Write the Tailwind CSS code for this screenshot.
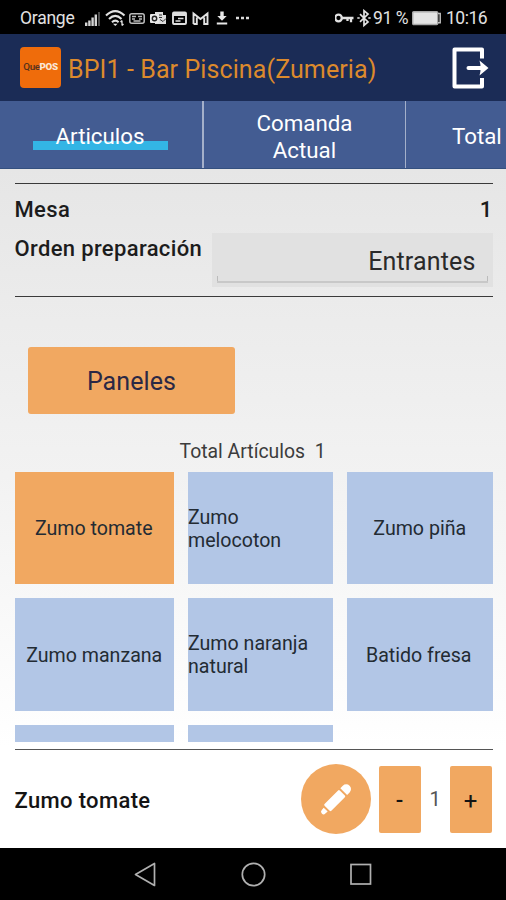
<!DOCTYPE html>
<html lang="es">
<head>
<meta charset="utf-8">
<title>Comandero</title>
<script src="https://cdn.jsdelivr.net/npm/@tailwindcss/browser@4"></script>
</head>
<body class="w-[506px] h-[900px] overflow-hidden flex flex-col bg-black text-[#222] whitespace-nowrap font-['Roboto','Noto_Sans',sans-serif]">

<!-- Status bar -->
<div class="h-[34px] shrink-0 flex items-center bg-black text-[#e2e2e2] pl-5 text-[17.5px] pt-[3px]">
  <span class="w-[64px] tracking-[-0.25px]">Orange</span>
  <svg class="h-5 w-[17px]" viewBox="0 0 17 20" fill="#d4d4d4"><path d="M1 13.500h2.400V17H1zM4.200 11.500h2.400V17H4.200zM7.400 8.500h2.400V17H7.400zM10.600 5.500H13V17h-2.400z"/><path d="M14 3H16v14h-2z" fill="#4c4c4c"/></svg>
  <svg class="ml-[4px] h-5 w-[22px]" viewBox="0 0 22 20" fill="none" stroke="#e2e2e2" stroke-width="2.100"><path d="M1 6.500C7 .8 13.500.8 19.500 6.500M4 10c4-4 8.500-4 12.500 0M7 13.200c2.200-2 4.400-2 6.600 0"/><path d="M8 14.700h4.600l-2.300 2.300z" fill="#e2e2e2" stroke="none"/><path d="M17 11.500v5m-1.500-3.500L17 11.500m1.500 3.500L17 16.500" stroke-width="1.300"/></svg>
  <svg class="ml-[2px] h-5 w-[16px]" viewBox="0 0 16 20" fill="none" stroke="#bdbdbd" stroke-width="1.500"><rect x=".8" y="4.800" width="14.400" height="9.400" rx="2"/><path d="M3 7.500h4M9 7.500h4M3 10h3M10 10h3M4.500 12h7"/></svg>
  <svg class="ml-[5px] h-5 w-[17px]" viewBox="0 0 17 20"><path d="M5 3h8v3h3v9H5z" fill="#dcdcdc"/><path d="M9 6h3M9 8.500h3m-2 2 3 2 3-3" stroke="#333" fill="none"/><rect y="5" width="9" height="9" rx="1" fill="#e8e8e8"/><circle cx="4.500" cy="9.500" r="2.200" fill="none" stroke="#222" stroke-width="1.400"/></svg>
  <svg class="ml-[5px] h-5 w-[15px]" viewBox="0 0 15 20" fill="none" stroke="#dedede" stroke-width="1.900"><rect x="1" y="3.500" width="13" height="11.500" rx="1"/><path d="M1 5.500h13" stroke-width="3"/><path d="M6 9.500h5.500M3.500 12h5" stroke-width="1.500"/></svg>
  <svg class="ml-[5px] h-5 w-[17px]" viewBox="0 0 17 20" fill="none" stroke="#e2e2e2" stroke-width="1.900"><path d="M1.500 15V4.500l7 5.500 7-5.500V15h-3.300V8.500M1.500 15h3.300V8.500"/></svg>
  <svg class="ml-[7px] h-5 w-[12px]" viewBox="0 0 12 20" fill="#e8e8e8"><path d="M4.300 2.500h3.400v4.500h3L6 11.800 1.300 7h3zM.8 13.500h10.400v1.900H.8z"/></svg>
  <svg class="ml-[8px] h-5 w-[14px]" viewBox="0 0 14 20" fill="#dcdcdc"><path d="M0 7.700h3v2.500H0zM5 7.700h3v2.500H5zM10 7.700h3v2.500h-3z"/></svg>
  <div class="ml-auto flex items-center pr-[18px]">
    <svg class="h-5 w-5" viewBox="0 0 20 20" fill="none" stroke="#e2e2e2" stroke-width="2.300"><circle cx="3.500" cy="9" r="3.300"/><path d="M7 9H18.500M16 9v4.200M12.500 9v3"/></svg>
    <svg class="ml-[2px] mr-px h-5 w-[15px]" viewBox="0 0 15 20" fill="none" stroke="#e2e2e2" stroke-width="1.700"><path d="M3 5.200 11 13 7 16.500V1.700L11 5 3 12.800"/><path d="M.3 9h2.400M11.300 9h2.400"/></svg>
    <span class="w-[39px] tracking-[-0.4px]">91 %</span>
    <svg class="h-5 w-[30px]" viewBox="0 0 30 20"><rect x=".7" y="2.700" width="25" height="12.800" rx="1" fill="#e4e4e4" stroke="#a8a8a8" stroke-width="1.400"/><path d="M26 4.500h2.200v9.200H26" fill="none" stroke="#bdbdbd" stroke-width="1.500"/></svg>
    <span class="ml-[4px] w-[42px] tracking-[-0.5px]">10:16</span>
  </div>
</div>

<!-- App header -->
<header class="h-[67px] shrink-0 flex items-center bg-[#1b2c56] pl-5 pr-[17px]">
  <div class="size-[41px] rounded-[4px] bg-[#ef6c0b] flex items-center justify-center text-[9.800px] font-medium tracking-[-0.4px] text-[#54301c]">Que<span class="font-black text-[#fbe6d6]">POS</span></div>
  <h1 class="ml-[7px] text-[25px] tracking-[0.1px] text-[#dc8a2d] pt-[4px]">BPI1 - Bar Piscina(Zumeria)</h1>
  <svg class="ml-auto h-[44px] w-[38px]" viewBox="0 0 38 44" fill="none" stroke="#fff" stroke-width="4"><path d="M31 12.500V3.500H3.500v37H31v-8.500" stroke-linejoin="round"/><path d="M17.500 22h14" stroke-linecap="round"/><path d="M28.500 14.500 37.500 22 28.500 29.500c1.500-5 1.500-10 0-15z" fill="#fff" stroke="none"/></svg>
</header>

<!-- Tabs -->
<nav class="h-[68px] shrink-0 flex bg-[#435c92] border-b border-[#34507f] text-white text-[22.300px] leading-[27px] text-center">
  <div class="w-[202px] shrink-0 flex items-center justify-center pt-[3px] pr-[2px]">
    <span class="w-[135px] bg-[linear-gradient(#33b5e5,#33b5e5)] bg-[length:100%_9px] bg-[position:0_18px] bg-no-repeat">Articulos</span>
  </div>
  <div class="w-[204px] shrink-0 flex items-center justify-center border-l-2 border-r border-[#a4b0ca] pt-[4px]"><span>Comanda<br>Actual</span></div>
  <div class="flex-1 flex items-center pl-[46px] pt-[3px]">Total</div>
</nav>

<!-- Order screen -->
<main class="h-[679px] shrink-0 flex flex-col pl-[14.500px] pr-[13.500px] bg-linear-to-b from-[#e6e6e6] via-[#f2f2f2] via-45% to-white to-85%">
  <section class="mt-[14px] h-[114px] border-y-[1.500px] border-[#3a3a3a] shrink-0 text-[22px] tracking-[0.350px] font-medium text-[#1c1c1c]">
    <div class="flex justify-between h-[48px] pt-[13px] leading-[26px]"><span>Mesa</span><span>1</span></div>
    <div class="flex justify-between mt-px">
      <span class="pt-[3px] leading-[26px]">Orden preparación</span>
      <div class="w-[281px] h-[54px] bg-[#e1e1e1] px-[5px] pt-[4px]">
        <div class="h-[46px] border-b-2 border-[#c8c8c8] flex items-center justify-end pr-[12px] pt-[5px] text-[25px] tracking-[0.150px] font-normal text-[#2a2a2a] bg-[linear-gradient(#bbb,#bbb),linear-gradient(#bbb,#bbb)] bg-[length:1px_5px] bg-[position:0_100%,100%_100%] bg-no-repeat">Entrantes</div>
      </div>
    </div>
  </section>

  <button class="mt-[50px] ml-[13.500px] w-[207px] h-[66.500px] shrink-0 rounded-[3px] bg-[#f1a861] text-[25px] tracking-[0.100px] text-[#2b2845] pt-[3px]">Paneles</button>

  <p class="mt-[25px] h-[33px] pl-[165px] shrink-0 text-[19.400px] leading-[25px] text-[#3c3c3c]">Total Artículos&nbsp; 1</p>

  <div class="h-[270px] overflow-hidden shrink-0 grid grid-cols-[159.500px_145px_145.500px] auto-rows-[112.500px] gap-x-[14px] gap-y-[14px] content-start text-[19.600px] leading-[23px] text-[#232b33]">
    <div class="bg-[#f1a861] flex items-center justify-center pt-[2px] pr-px">Zumo tomate</div>
    <div class="bg-[#b2c6e6] flex items-center pt-[2px]">Zumo<br>melocoton</div>
    <div class="bg-[#b2c6e6] flex items-center justify-center pt-[2px]">Zumo piña</div>
    <div class="bg-[#b2c6e6] flex items-center justify-center pt-[2px]">Zumo manzana</div>
    <div class="bg-[#b2c6e6] flex items-center pt-[2px]">Zumo naranja<br>natural</div>
    <div class="bg-[#b2c6e6] flex items-center justify-center pt-[2px] pr-[2px]">Batido fresa</div>
    <div class="bg-[#b2c6e6]"></div>
    <div class="bg-[#b2c6e6]"></div>
  </div>

  <footer class="mt-[7.500px] flex-1 flex items-center border-t-[1.500px] border-[#555] text-[#141414]">
    <span class="text-[22px] tracking-[0.350px] font-medium pt-[2px]">Zumo tomate</span>
    <div class="ml-auto flex items-center pr-[1px]">
      <div class="size-[70px] rounded-full bg-[#f1a861] flex items-center justify-center">
        <svg class="size-[34px]" viewBox="0 0 34 34" fill="#fff"><g transform="translate(17.300 17) rotate(-45)"><rect x="-13" y="-4.800" width="21.500" height="9.600" rx="1.200"/><path d="M10.500-4.800h3.500a4.800 4.800 0 0 1 0 9.600h-3.500z"/><path d="M-15-2.800v5.600l-3-.3a2.500 2.500 0 0 1 0-5z"/></g></svg>
      </div>
      <button class="ml-[8px] w-[42px] h-[67px] rounded-[2px] bg-[#f1a861] text-[22px] font-medium pt-[3px]">-</button>
      <span class="w-[29px] text-center text-[20px] text-[#555]">1</span>
      <button class="w-[42px] h-[67px] rounded-[2px] bg-[#f1a861] text-[24px] font-normal pt-[3px]">+</button>
    </div>
  </footer>
</main>

<!-- System navigation -->
<div class="flex-1 flex justify-center items-center bg-black">
  <svg class="h-[52px] w-[506px]" viewBox="0 0 506 52" fill="none" stroke="#b0b0b0" stroke-width="1.700"><path d="M135.500 26.500 154.500 15.500v22z" stroke-linejoin="round"/><circle cx="253.500" cy="26.500" r="11.200"/><rect x="351" y="16.500" width="19.500" height="19.500"/></svg>
</div>
</body>
</html>
